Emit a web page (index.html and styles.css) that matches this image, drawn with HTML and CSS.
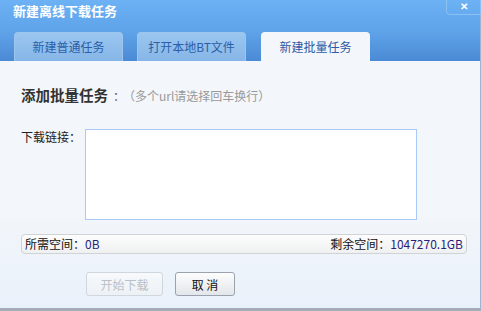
FILE: index.html
```html
<!DOCTYPE html>
<html lang="zh-CN">
  <head>
    <meta charset="UTF-8" />
    <title>新建离线下载任务</title>
    <link rel="stylesheet" href="styles.css">
  </head>
  <body>
    <div class="dialog">
      <div class="header">
        <div class="title">新建离线下载任务</div>
        <button class="close" type="button">✕</button>
        <div class="tabs">
          <div class="tab">新建普通任务</div>
          <div class="tab">打开本地BT文件</div>
          <div class="tab active">新建批量任务</div>
        </div>
      </div>
      <div class="content">
        <h2 class="heading">添加批量任务<span class="colon">：</span><span class="hint">（多个url请选择回车换行）</span></h2>
        <div class="row">
          <label for="links">下载链接：</label>
          <textarea id="links"></textarea>
        </div>
        <div class="status">
          <span>所需空间：<b class="val">0B</b></span>
          <span>剩余空间：<b class="val">1047270.1GB</b></span>
        </div>
        <div class="actions">
          <button class="btn" type="button" disabled>开始下载</button>
          <button class="btn" type="button">取 消</button>
        </div>
      </div>
    </div>
  </body>
</html>
```

FILE: styles.css
```css
body {
  margin: 0;
  font-family: "Noto Sans CJK SC", "DejaVu Sans", sans-serif;
  font-size: 12px;
  color: #222;
}
.dialog {
  width: 481px;
  height: 311px;
  box-sizing: border-box;
  border-right: 1px solid #9fb4d2;
  border-bottom: 3px solid #a4acb8;
  display: flex;
  flex-direction: column;
}
.header {
  position: relative;
  height: 61px;
  background: linear-gradient(#6cb2f4, #5c9fe6 60%, #4b8ad5);
  display: flex;
  flex-direction: column;
  justify-content: space-between;
}
.title {
  color: #fff;
  font-weight: bold;
  font-size: 13px;
  line-height: 14px;
  padding: 4px 13px 0;
}
.close {
  position: absolute;
  top: -1px;
  right: -1px;
  width: 35px;
  height: 16px;
  border: 1px solid #8dc0f2;
  border-radius: 0 0 0 4px;
  background: transparent;
  color: #fff;
  font-size: 10px;
  font-weight: bold;
  line-height: 12px;
  padding: 0;
}
.tabs {
  display: flex;
  gap: 14px;
  padding-left: 14px;
}
.tab {
  width: 109px;
  height: 29px;
  box-sizing: border-box;
  border: 1px solid #9cc6ee;
  border-bottom: none;
  border-radius: 4px 4px 0 0;
  background: linear-gradient(#9ac6ef, #86b6e8);
  color: #2c5ea8;
  font-size: 12px;
  line-height: 28px;
  text-align: center;
}
.tab.active {
  background: #f3f6fa;
  border-color: #f3f6fa;
  color: #2b5aa6;
  margin-left: 1px;
}
.content {
  flex: 1;
  background: linear-gradient(#f3f6fa 60%, #e9f1fa);
  padding: 24px 13px 0 21px;
}
.heading {
  margin: 0;
  font-size: 14.5px;
  font-weight: bold;
  color: #333;
  line-height: 20px;
}
.colon {
  font-weight: normal;
  font-size: 12px;
  color: #555;
  margin: 0 4px 0 5px;
}
.hint {
  font-weight: normal;
  font-size: 12px;
  color: #999;
}
.row {
  display: flex;
  margin-top: 23px;
}
.row label {
  width: 64px;
  line-height: 16px;
}
textarea {
  width: 332px;
  height: 91px;
  box-sizing: border-box;
  border: 1px solid #a9c9f6;
  background: #fff;
  resize: none;
  margin: 0;
  outline: none;
}
.status {
  margin-top: 14px;
  height: 20px;
  box-sizing: border-box;
  border: 1px solid #cfd2d6;
  border-radius: 4px;
  background: linear-gradient(#fdfdfd, #eff0f1);
  display: flex;
  justify-content: space-between;
  padding: 0 3px;
  line-height: 18px;
  color: #111;
}
.val {
  font-weight: normal;
  color: #2a1f7a;
}
.actions {
  display: flex;
  gap: 12px;
  margin-top: 18px;
  padding-left: 65px;
}
.btn {
  height: 24px;
  padding: 0;
  border: 1px solid #9aa3ad;
  border-radius: 3px;
  background: linear-gradient(#fdfdfd, #e3e6ea);
  font-family: inherit;
  font-size: 12px;
  color: #111;
  width: 60px;
}
.btn:disabled {
  width: 77px;
  border-color: #cfd6de;
  background: linear-gradient(#f7f9fb, #edf1f5);
  color: #b9c0c8;
}
```
